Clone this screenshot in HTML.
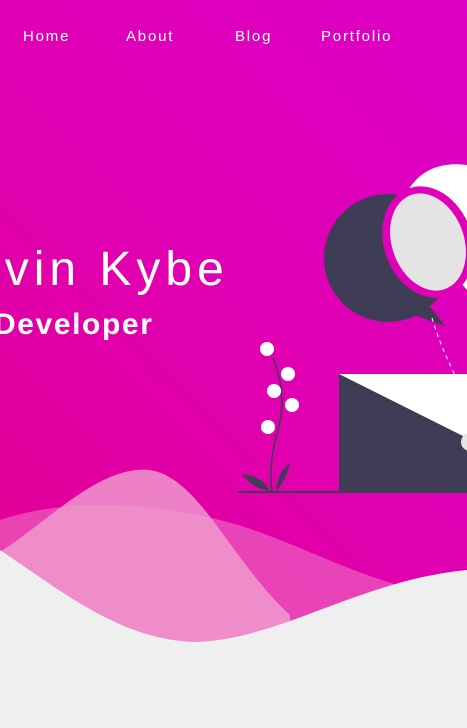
<!DOCTYPE html>
<html><head><style>
html,body{margin:0;padding:0;width:467px;height:728px;overflow:hidden}
body{background:linear-gradient(225deg,#dc00c6 0%,#e000b0 50%,#e4008a 100%);font-family:"Liberation Sans",sans-serif;position:relative}
.nav{position:absolute;top:28px;color:#fff;font-size:15px;letter-spacing:1.8px}
.t1{position:absolute;left:-64px;top:242px;color:#fff;font-size:48px;letter-spacing:5px;white-space:nowrap}
.t2{position:absolute;left:-6px;top:308px;color:#fff;font-size:30px;font-weight:bold;letter-spacing:1.6px;white-space:nowrap}
svg{position:absolute;left:0;top:0}
</style></head><body>
<div class="nav" style="left:23px">Home</div>
<div class="nav" style="left:126px">About</div>
<div class="nav" style="left:235px">Blog</div>
<div class="nav" style="left:321px">Portfolio</div>
<div class="t1">Kevin Kybe</div>
<div class="t2">Developer</div>
<svg width="467" height="728" viewBox="0 0 467 728">
<path d="M467 165 C430 160 405 180 400 215 L467 290 Z" fill="#fff"/>
<circle cx="388" cy="258" r="64" fill="#3f3d56"/>
<path d="M400 310 L445 326 L425 300 Z" fill="#3f3d56"/>
<ellipse cx="428" cy="242" rx="44" ry="57" fill="#e000b8" transform="rotate(-20 428 242)"/>
<ellipse cx="428" cy="242" rx="36" ry="50" fill="#e4e4e4" transform="rotate(-20 428 242)"/>
<path d="M432 318 Q440 345 455 375" stroke="#fff" stroke-width="1" stroke-dasharray="4 4" fill="none"/>
<rect x="339" y="374" width="128" height="118" fill="#3f3d56"/>
<path d="M339 374 L467 374 L467 438 Z" fill="#fff"/>
<circle cx="470" cy="442" r="9" fill="#e4e4e4"/>
<line x1="238" y1="492" x2="467" y2="492" stroke="#3f3d56" stroke-width="2"/>
<path d="M273 358 Q288 395 278 430 Q268 465 272 492" stroke="#3f3d56" stroke-width="1.5" fill="none"/>
<path d="M242 474 Q262 476 270 491 Q252 488 242 474Z" fill="#3f3d56"/>
<path d="M290 463 Q285 482 276 491 Q278 472 290 463Z" fill="#3f3d56"/>
<circle cx="267" cy="349" r="7" fill="#fff"/>
<circle cx="288" cy="374" r="7" fill="#fff"/>
<circle cx="274" cy="391" r="7" fill="#fff"/>
<circle cx="292" cy="405" r="7" fill="#fff"/>
<circle cx="268" cy="427" r="7" fill="#fff"/>
<path d="M0 520 C60 500 140 500 220 520 C300 540 360 585 467 600 L467 728 L0 728Z" fill="#ef6fc4" opacity="0.6"/>
<path d="M0 552 C50 520 100 465 150 470 C200 478 230 560 290 615 L290 728 L0 728Z" fill="#f0a0d0" opacity="0.8"/>
<path d="M0 550 C60 590 120 640 195 642 C280 640 360 580 467 570 L467 728 L0 728Z" fill="#efefef"/>
</svg>
</body></html>
